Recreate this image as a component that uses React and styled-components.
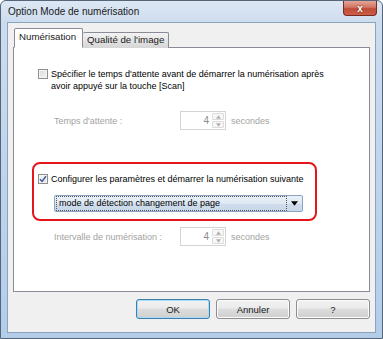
import styled, { createGlobalStyle } from 'styled-components';

const GlobalStyle = createGlobalStyle`
  html, body {
    margin: 0;
    padding: 0;
    background: #ffffff;
  }
  body {
    font-family: "Liberation Sans", Arial, sans-serif;
    font-size: 9px;
    color: #000;
  }
`;

const Window = styled.div`
  width: 383px;
  height: 339px;
  box-sizing: border-box;
  border: 1px solid #55667a;
  border-radius: 6px 6px 0 0;
  background: linear-gradient(to bottom, #dce7f4 0px, #cddcee 22px, #bcd3ec 60%, #b3cde9 100%);
  display: flex;
  flex-direction: column;
  padding: 0 6px 5px 6px;
`;

const TitleBar = styled.div`
  height: 21px;
  display: flex;
  align-items: center;
`;

const Title = styled.span`
  padding-left: 1px;
  font-size: 10px;
  color: #1a1a1a;
`;

const CloseButton = styled.div`
  margin-left: auto;
  margin-right: -1px;
  align-self: flex-start;
  width: 34px;
  height: 15px;
  box-sizing: border-box;
  border: 1px solid #7a2b20;
  border-top: none;
  border-radius: 0 0 4px 4px;
  background: linear-gradient(to bottom, #e3a597 0%, #d27564 45%, #c04a36 55%, #cc6048 100%);
  display: flex;
  align-items: center;
  justify-content: center;
  color: #fff;
  font-weight: bold;
  font-size: 10px;
  text-shadow: 0 0 2px #5a1a10;
`;

const Client = styled.div`
  flex: 1;
  background: #f0f0f0;
  border: 1px solid #8ba3bf;
  padding: 6px 5px 0 5px;
  display: flex;
  flex-direction: column;
`;

const TabsRow = styled.div`
  display: flex;
  align-items: flex-end;
  height: 19px;
  padding-left: 1px;
  margin-bottom: -1px;
  position: relative;
  z-index: 1;
`;

const Tab = styled.div`
  box-sizing: border-box;
  height: ${p => (p.active ? '20px' : '16px')};
  border: 1px solid #898c95;
  border-bottom: ${p => (p.active ? '1px solid #ffffff' : 'none')};
  border-left: ${p => (p.first ? '1px solid #898c95' : 'none')};
  border-radius: 2px 2px 0 0;
  background: ${p => (p.active ? '#ffffff' : 'linear-gradient(to bottom, #f3f3f3, #e4e4e4 50%, #d6d6d6)')};
  padding: ${p => (p.active ? '2px 6px 0 4px' : '1px 4px 0 4px')};
  font-size: 9.7px;
  color: #1a1a1a;
`;

const Panel = styled.div`
  height: 245px;
  box-sizing: border-box;
  background: #ffffff;
  border: 1px solid #898c95;
  padding: 18px 0 0 18px;
`;

const Section = styled.div`
  box-sizing: border-box;
  border: 2px solid ${p => (p.highlight ? '#e8141b' : 'transparent')};
  border-radius: 8px;
  width: ${p => (p.highlight ? '285px' : 'auto')};
  margin-top: ${p => p.top || 0}px;
  padding: ${p => (p.highlight ? '9px 0 7px 4px' : '0 0 0 4px')};
`;

const OptionRow = styled.div`
  display: flex;
  align-items: flex-start;
  line-height: 12px;
  white-space: nowrap;
`;

const CheckBox = styled.div`
  width: 10px;
  height: 10px;
  box-sizing: border-box;
  margin: 1px 3px 0 0;
  flex-shrink: 0;
  border: 1px solid #8f8f8f;
  background: ${p => (p.checked ? 'linear-gradient(135deg, #f6f6f6, #e2e2e2)' : 'linear-gradient(135deg, #dcdcdc, #f2f2f2)')};
  box-shadow: inset 0 0 0 1px #f4f4f4;
  display: flex;
  align-items: center;
  justify-content: center;
`;

const FieldRow = styled.div`
  display: flex;
  align-items: center;
  padding-left: 16px;
  margin-top: ${p => p.top || 0}px;
  height: 19px;
`;

const FieldLabel = styled.span`
  width: 126px;
  color: #a3a3a3;
`;

const Unit = styled.span`
  margin-left: 5px;
  color: #a3a3a3;
`;

const Spinner = styled.div`
  width: 46px;
  height: 19px;
  box-sizing: border-box;
  border: 1px solid #d4d4d4;
  background: #fff;
  display: flex;
`;

const SpinValue = styled.div`
  flex: 1;
  text-align: right;
  padding-right: 3px;
  line-height: 17px;
  color: #8c8c8c;
  font-size: 10px;
`;

const SpinButtons = styled.div`
  width: 12px;
  margin: 1px 1px 1px 0;
  display: flex;
  flex-direction: column;
  gap: 1px;
`;

const SpinButton = styled.div`
  flex: 1;
  border: 1px solid #dcdcdc;
  border-radius: 1px;
  background: #f7f7f7;
  display: flex;
  align-items: center;
  justify-content: center;
`;

const Combo = styled.div`
  margin: 10px 0 0 16px;
  width: 249px;
  height: 17px;
  box-sizing: border-box;
  border: 1px solid #8aa4c2;
  border-radius: 2px;
  background: linear-gradient(to bottom, #e9f0f8 0%, #dee8f3 50%, #cfdcec 51%, #cad9ea 100%);
  display: flex;
  align-items: center;
  padding: 1px;
`;

const ComboText = styled.div`
  flex: 1;
  height: 13px;
  line-height: 12px;
  border: 1px dotted #555;
  padding-left: 2px;
  font-size: 9px;
  color: #000;
`;

const ComboArrow = styled.div`
  width: 14px;
  display: flex;
  justify-content: center;
`;

const ButtonRow = styled.div`
  display: flex;
  justify-content: flex-end;
  gap: 6px;
  margin-top: 7px;
`;

const Button = styled.div`
  width: 74px;
  height: 20px;
  box-sizing: border-box;
  border: 1px solid ${p => (p.primary ? '#3c7fb1' : '#8e8e8e')};
  border-radius: 3px;
  background: linear-gradient(to bottom, #f2f2f2 0%, #ebebeb 45%, #dddddd 50%, #cfcfcf 100%);
  box-shadow: inset 0 0 0 1px ${p => (p.primary ? '#a9dbf6' : '#fcfcfc')};
  display: flex;
  align-items: center;
  justify-content: center;
  font-size: 9.5px;
  color: #1a1a1a;
`;

const Tick = () => (
  <svg width="8" height="8" viewBox="0 0 8 8">
    <path d="M1 4.2 L3 6.4 L7 1.2" fill="none" stroke="#3a5a9c" strokeWidth="1.4" />
  </svg>
);

const Triangle = ({ up, size = 5, color = '#b0b0b0' }) => (
  <svg width={size} height={Math.ceil(size / 2) + 1} viewBox="0 0 6 4">
    <path d={up ? 'M0 4 L3 0 L6 4 Z' : 'M0 0 L6 0 L3 4 Z'} fill={color} />
  </svg>
);

const NumberSpin = ({ value }) => (
  <Spinner>
    <SpinValue>{value}</SpinValue>
    <SpinButtons>
      <SpinButton><Triangle up /></SpinButton>
      <SpinButton><Triangle /></SpinButton>
    </SpinButtons>
  </Spinner>
);

export default function App() {
  return (
    <>
      <GlobalStyle />
      <Window>
        <TitleBar>
          <Title>Option Mode de numérisation</Title>
          <CloseButton>x</CloseButton>
        </TitleBar>
        <Client>
          <TabsRow>
            <Tab active first>Numérisation</Tab>
            <Tab>Qualité de l'image</Tab>
          </TabsRow>
          <Panel>
            <Section>
              <OptionRow>
                <CheckBox />
                <span>
                  Spécifier le temps d'attente avant de démarrer la numérisation après
                  <br />
                  avoir appuyé sur la touche [Scan]
                </span>
              </OptionRow>
              <FieldRow top={19}>
                <FieldLabel>Temps d'attente :</FieldLabel>
                <NumberSpin value="4" />
                <Unit>secondes</Unit>
              </FieldRow>
            </Section>
            <Section highlight top={30}>
              <OptionRow>
                <CheckBox checked><Tick /></CheckBox>
                <span>Configurer les paramètres et démarrer la numérisation suivante</span>
              </OptionRow>
              <Combo>
                <ComboText>mode de détection changement de page</ComboText>
                <ComboArrow><Triangle size={7} color="#000" /></ComboArrow>
              </Combo>
            </Section>
            <Section top={4}>
              <FieldRow>
                <FieldLabel>Intervalle de numérisation :</FieldLabel>
                <NumberSpin value="4" />
                <Unit>secondes</Unit>
              </FieldRow>
            </Section>
          </Panel>
          <ButtonRow>
            <Button primary>OK</Button>
            <Button>Annuler</Button>
            <Button>?</Button>
          </ButtonRow>
        </Client>
      </Window>
    </>
  );
}
